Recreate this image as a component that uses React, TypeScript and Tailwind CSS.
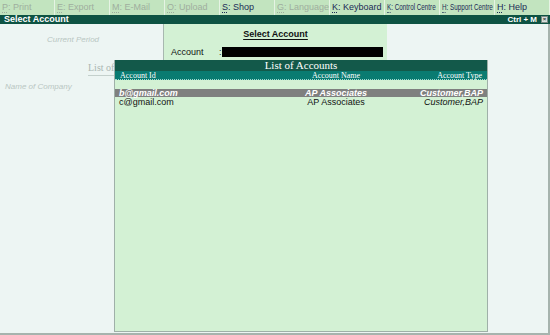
import React from 'react';

const tools = [
  { key: 'P', label: 'Print', on: false },
  { key: 'E', label: 'Export', on: false },
  { key: 'M', label: 'E-Mail', on: false },
  { key: 'O', label: 'Upload', on: false },
  { key: 'S', label: 'Shop', on: true },
  { key: 'G', label: 'Language', on: false },
  { key: 'K', label: 'Keyboard', on: true },
  { key: 'K', label: 'Control Centre', on: true },
  { key: 'H', label: 'Support Centre', on: true },
  { key: 'H', label: 'Help', on: true },
];

const rows = [
  { id: 'b@gmail.com', name: 'AP Associates', type: 'Customer,BAP', sel: true },
  { id: 'c@gmail.com', name: 'AP Associates', type: 'Customer,BAP', sel: false },
];

export default function App() {
  return (
    <div className="w-[550px] h-[335px] overflow-hidden bg-white flex flex-col font-['Liberation_Sans',sans-serif]">
      {/* Toolbar */}
      <div className="flex h-[15px] bg-[#c2e4bf]">
        {tools.map((t, i) => (
          <div
            key={i}
            className={`w-[55px] flex items-center pl-[2px] border-r border-[#e6f3e4] whitespace-nowrap overflow-hidden text-[9px] ${
              t.on ? 'text-[#1b2a55]' : 'text-[#9fae9e]'
            }`}
          >
            <span className={t.label.length > 10 ? 'inline-block origin-left scale-x-[0.7]' : 'inline-block'}>
              <span className="underline decoration-dotted underline-offset-2">{t.key}</span>
              <span>: {t.label}</span>
            </span>
          </div>
        ))}
      </div>

      {/* Title bar */}
      <div className="flex items-center justify-between h-[9px] bg-[#0e5343] text-white text-[9px] font-bold leading-none pl-[4px] pr-[2px]">
        <span>Select Account</span>
        <div className="flex items-center gap-[4px]">
          <span className="text-[8px]">Ctrl + M</span>
          <span className="w-[7px] h-[7px] bg-[#d8e0dc] border border-[#7a8a84] text-[#333] text-[6px] leading-[5px] flex items-center justify-center">×</span>
        </div>
      </div>

      {/* Main */}
      <div className="relative flex-1 bg-[#edf5f3] border-r-2 border-b-2 border-[#a6b3ad]">
        {/* background page */}
        <div className="absolute left-[47px] top-[10px] text-[8px] italic text-[#b9c6c2]">Current Period</div>
        <div className="absolute left-[88px] top-[36px] text-[10px] font-['Liberation_Serif',serif] text-[#aab6b2] border-b border-[#c4d0cc]">List of</div>
        <div className="absolute left-[5px] top-[57px] text-[8px] italic text-[#b9c6c2]">Name of Company</div>

        {/* Select Account panel */}
        <div className="absolute left-[163px] top-0 w-[224px] h-[36px] bg-[#d3f1d4] border-l border-[#a8b8b0] flex flex-col">
          <div className="text-center text-[9px] font-bold text-[#111] mt-[4px]">
            <span className="underline underline-offset-2">Select Account</span>
          </div>
          <div className="flex items-center mt-[4px] pl-[7px] text-[9px] text-[#111]">
            <span className="w-[48px]">Account</span>
            <span className="w-[3px]">:</span>
            <div className="w-[161px] h-[10px] bg-black" />
          </div>
        </div>

        {/* List of Accounts */}
        <div className="absolute left-[114px] top-[36px] w-[374px] h-[272px] bg-[#d3f1d4] border-x border-b border-[#9fb0a8] flex flex-col">
          <div className="h-[11px] bg-[#13594a] text-white text-center text-[11px] leading-[11px] font-['Liberation_Serif',serif]">
            List of Accounts
          </div>
          <div className="grid grid-cols-[181px_70px_1fr] h-[9px] bg-[#0a7b71] text-white text-[8px] leading-[9px] font-['Liberation_Serif',serif] px-[5px] border-b border-dotted border-[#9fd8d0]">
            <span>Account Id</span>
            <span className="text-center whitespace-nowrap">Account Name</span>
            <span className="text-right">Account Type</span>
          </div>
          <div className="h-[9px]" />
          {rows.map((r) => (
            <div
              key={r.id}
              className={`grid grid-cols-[182px_70px_1fr] h-[8px] mb-[1px] text-[9px] leading-[8px] px-[4px] ${
                r.sel ? 'bg-[#7f807f] text-white font-bold italic' : 'text-[#111]'
              }`}
            >
              <span>{r.id}</span>
              <span className="text-center whitespace-nowrap">{r.name}</span>
              <span className="text-right italic">{r.type}</span>
            </div>
          ))}
        </div>
      </div>
    </div>
  );
}
